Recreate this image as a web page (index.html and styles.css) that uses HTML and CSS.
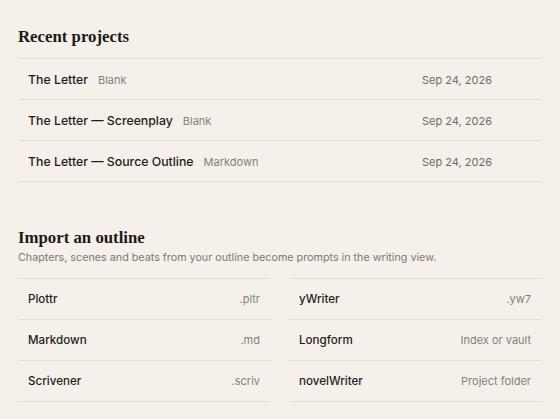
FILE: index.html
```html
<!DOCTYPE html>
<html>
<head>
<meta charset="utf-8">
<link rel="stylesheet" href="styles.css">
</head>
<body>
<main class="page">
  <section class="recent">
    <h2 class="heading">Recent projects</h2>
    <ul class="project-list">
      <li class="project"><span class="project-name">The Letter</span><span class="project-kind">Blank</span><span class="project-date">Sep 24, 2026</span></li>
      <li class="project"><span class="project-name">The Letter — Screenplay</span><span class="project-kind">Blank</span><span class="project-date">Sep 24, 2026</span></li>
      <li class="project"><span class="project-name">The Letter — Source Outline</span><span class="project-kind">Markdown</span><span class="project-date">Sep 24, 2026</span></li>
    </ul>
  </section>
  <section class="import">
    <h2 class="heading">Import an outline</h2>
    <p class="subtitle">Chapters, scenes and beats from your outline become prompts in the writing view.</p>
    <div class="import-grid">
      <ul class="import-col">
        <li class="import-item"><span class="import-name">Plottr</span><span class="import-ext">.pltr</span></li>
        <li class="import-item"><span class="import-name">Markdown</span><span class="import-ext">.md</span></li>
        <li class="import-item"><span class="import-name">Scrivener</span><span class="import-ext">.scriv</span></li>
      </ul>
      <ul class="import-col">
        <li class="import-item"><span class="import-name">yWriter</span><span class="import-ext">.yw7</span></li>
        <li class="import-item"><span class="import-name">Longform</span><span class="import-ext">Index or vault</span></li>
        <li class="import-item"><span class="import-name">novelWriter</span><span class="import-ext">Project folder</span></li>
      </ul>
    </div>
  </section>
</main>
</body>
</html>
```
FILE: styles.css
```css
html, body {
  margin: 0;
  padding: 0;
  background: #f5f0e9;
}
body {
  font-family: Inter, "Noto Sans", sans-serif;
  color: #1f1c19;
}
.page {
  padding: 27px 18px 0 18px;
}
.heading {
  margin: 0;
  font-family: "Liberation Serif", "DejaVu Serif", serif;
  font-weight: 700;
  font-size: 16.8px;
  line-height: 20px;
  color: #1c1a17;
}
.recent .heading {
  margin-bottom: 11px;
}
ul {
  list-style: none;
  margin: 0;
  padding: 0;
}
.project-list {
  border-top: 1px solid #e4ded4;
}
.project {
  display: flex;
  align-items: baseline;
  height: 39px;
  line-height: 39px;
  padding: 1px 50px 0 10px;
  border-bottom: 1px solid #e4ded4;
}
.project-name {
  font-size: 12.3px;
  font-weight: 500;
  color: #1f1c19;
}
.project-kind {
  font-size: 11px;
  color: #85807a;
  margin-left: 10px;
}
.project-date {
  margin-left: auto;
  font-size: 11px;
  color: #6f6b65;
}
.import {
  margin-top: 46px;
}
.subtitle {
  margin: 3px 0 0 0;
  font-size: 10.75px;
  line-height: 14px;
  color: #7d7870;
}
.import-grid {
  margin-top: 13px;
  display: grid;
  grid-template-columns: 1fr 1fr;
  column-gap: 18px;
}
.import-col {
  border-top: 1px solid #e4ded4;
}
.import-item {
  display: flex;
  align-items: baseline;
  height: 40px;
  line-height: 40px;
  border-bottom: 1px solid #e4ded4;
  padding: 0 11px 0 10px;
}
.import-name {
  font-size: 11.6px;
  font-weight: 500;
}
.import-ext {
  margin-left: auto;
  font-size: 11px;
  color: #85807a;
}
```
